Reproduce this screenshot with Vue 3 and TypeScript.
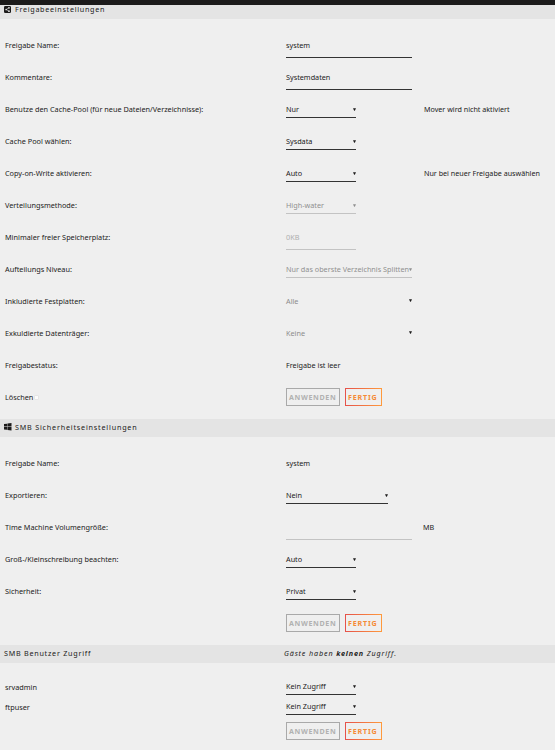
<script setup lang="ts">
import { ref } from 'vue'

type Kind = 'input' | 'select' | 'picker' | 'text'
interface Row {
  label: string
  kind: Kind
  value: string
  size?: 'narrow' | 'medium' | 'wide'
  disabled?: boolean
  note?: string
}

const share: Row[] = [
  { label: 'Freigabe Name:', kind: 'input', value: 'system', size: 'wide' },
  { label: 'Kommentare:', kind: 'input', value: 'Systemdaten', size: 'wide' },
  { label: 'Benutze den Cache-Pool (für neue Dateien/Verzeichnisse):', kind: 'select', value: 'Nur', note: 'Mover wird nicht aktiviert' },
  { label: 'Cache Pool wählen:', kind: 'select', value: 'Sysdata' },
  { label: 'Copy-on-Write aktivieren:', kind: 'select', value: 'Auto', note: 'Nur bei neuer Freigabe auswählen' },
  { label: 'Verteilungsmethode:', kind: 'select', value: 'High-water', disabled: true },
  { label: 'Minimaler freier Speicherplatz:', kind: 'input', value: '0KB', disabled: true },
  { label: 'Aufteilungs Niveau:', kind: 'select', value: 'Nur das oberste Verzeichnis Splitten', size: 'wide', disabled: true },
  { label: 'Inkludierte Festplatten:', kind: 'picker', value: 'Alle', size: 'wide' },
  { label: 'Exkuldierte Datenträger:', kind: 'picker', value: 'Keine', size: 'wide' },
  { label: 'Freigabestatus:', kind: 'text', value: 'Freigabe ist leer', size: 'wide' },
]
const smb: Row[] = [
  { label: 'Freigabe Name:', kind: 'text', value: 'system' },
  { label: 'Exportieren:', kind: 'select', value: 'Nein', size: 'medium' },
  { label: 'Time Machine Volumengröße:', kind: 'input', value: '', size: 'wide', disabled: true, note: 'MB' },
  { label: 'Groß-/Kleinschreibung beachten:', kind: 'select', value: 'Auto' },
  { label: 'Sicherheit:', kind: 'select', value: 'Privat' },
]
const users: Row[] = ['srvadmin', 'ftpuser'].map((label) => ({ label, kind: 'select', value: 'Kein Zugriff' }))
const sections = [
  { id: 'share', rows: share },
  { id: 'smb', rows: smb },
  { id: 'users', rows: users },
]
const remove = ref(false)
</script>

<template>
  <main class="page">
    <div class="topbar"></div>
    <section v-for="s in sections" :key="s.id" :class="['section', s.id]">
      <header class="title">
        <template v-if="s.id === 'share'">
          <svg class="icon" viewBox="0 0 14 14"><rect width="14" height="14" rx="2.5" fill="#1c1b1b" /><path d="M10 3.5 4.5 7 10 10.5" fill="none" stroke="#e4e4e4" stroke-width="1.2" /><g fill="#e4e4e4"><circle cx="10" cy="3.7" r="1.7" /><circle cx="4.3" cy="7" r="1.7" /><circle cx="10" cy="10.3" r="1.7" /></g></svg>
          <span>Freigabeeinstellungen</span>
        </template>
        <template v-else-if="s.id === 'smb'">
          <svg class="icon win" viewBox="0 0 16 16"><path fill="#1c1b1b" d="M0 2.3 6.5 1.4V7.6H0ZM7.3 1.3 16 0V7.6H7.3ZM0 8.4H6.5V14.6L0 13.7ZM7.3 8.4H16V16L7.3 14.7Z" /></svg>
          <span>SMB Sicherheitseinstellungen</span>
        </template>
        <template v-else>
          <span class="lead">SMB Benutzer Zugriff</span>
          <em>Gäste haben <b>keinen</b> Zugriff.</em>
        </template>
      </header>
      <div class="rows">
        <div v-for="r in s.rows" :key="r.label" class="row">
          <div class="label"><span>{{ r.label }}</span></div>
          <div :class="['field', r.kind, r.size ?? 'narrow', { disabled: r.disabled }]">
            <span>{{ r.value }}</span>
            <svg v-if="r.kind === 'select' || r.kind === 'picker'" class="arrow" viewBox="0 0 3 3"><path d="M0 .3H3L1.8 2.7H1.2Z" fill="currentColor" /></svg>
          </div>
          <div v-if="r.note" :class="['note', { unit: r.note === 'MB' }]"><span>{{ r.note }}</span></div>
        </div>
        <div class="row actions">
          <label v-if="s.id === 'share'" class="label"><span>Löschen</span><input v-model="remove" type="checkbox" class="check" /></label>
          <div v-else class="label"></div>
          <div class="buttons">
            <button class="btn" disabled><span>ANWENDEN</span></button>
            <button class="btn done"><span>FERTIG</span></button>
          </div>
        </div>
      </div>
    </section>
  </main>
</template>

<style>
body { background: #efefef; }
</style>

<style scoped>
.page {
  box-sizing: border-box;
  width: 555px;
  height: 750px;
  overflow: hidden;
  background: #efefef;
  color: #1c1b1b;
  font: 7.3px/10px "Noto Sans", "Open Sans", sans-serif;
  white-space: nowrap;
}
.topbar { height: 5px; background: #1c1b1b; }
.title {
  display: flex;
  align-items: center;
  box-sizing: border-box;
  height: 18px;
  padding: 0 0 2px 4px;
  background: #e4e4e4;
  font-size: 7.2px;
  letter-spacing: .75px;
}
.share .title { height: 14px; padding-bottom: 6px; letter-spacing: .7px; }
.smb .title { letter-spacing: .8px; }
.icon { width: 7px; height: 7px; margin-right: 4px; }
.icon.win { width: 7.5px; height: 7.5px; margin-right: 3.5px; }
.lead { width: 280px; }
.title em { letter-spacing: .85px; }
.rows { padding: 10px 0 6px 5px; }
.smb .rows { padding-bottom: 7px; }
.users .rows { padding-top: 14px; }
.row { display: grid; grid-template-columns: 281px 138px 1fr; align-items: center; height: 32px; }
.smb .row.actions { height: 31px; }
.users .row { height: 20px; }
.users .row.actions { height: 27px; }
.label, .note { display: flex; align-items: center; }
.check { appearance: none; box-sizing: border-box; width: 5px; height: 5px; margin: 0 0 0 1px; background: #fcfcfc; border: 1px solid #e6e6e6; border-radius: 1px; }
.label, .note { position: relative; }
.field { display: flex; align-items: center; justify-content: space-between; box-sizing: border-box; height: 18px; border: solid #333; border-width: 1px 0; border-top-color: transparent; font-size: 7.25px; }
.users .field { margin-bottom: 2px; }
.narrow { width: 70px; }
.medium { width: 102px; }
.wide { width: 126px; }
.input { height: 26px; }
.text, .picker { border-color: transparent; }
.picker span { color: #8c8c8c; }
.disabled { border-bottom-color: #c3c3c3; color: #8f8f8f; }
.input.disabled { color: #aeaeae; }
.arrow { width: 3px; height: 3px; flex: none; }
.picker .arrow { margin-bottom: 1px; }
.note { font-size: 7.17px; }
.note.unit { margin-left: -1px; }
.buttons { display: flex; gap: 5px; }
.btn {
  box-sizing: border-box;
  display: flex;
  align-items: center;
  height: 18px;
  width: 54px;
  padding: 0 0 0 2px;
  border: 1px solid #a9a9a9;
  background: none;
  color: #b1b1b1;
  font: bold 7.1px/10px "Noto Sans", sans-serif;
  letter-spacing: .65px;
}
.done { width: 37px; color: #f58a35; letter-spacing: .85px; border-image: linear-gradient(90deg, #e5514a, #ff9a3c) 1; }
</style>
